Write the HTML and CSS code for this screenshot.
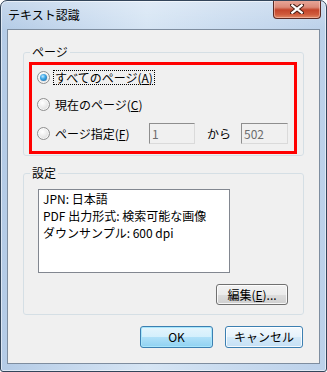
FILE: index.html
```html
<!DOCTYPE html>
<html lang="ja">
<head>
<meta charset="utf-8">
<title>テキスト認識</title>
<link rel="stylesheet" href="styles.css">
</head>
<body>
<div class="window">
  <div class="titlebar">
    <span class="title">テキスト認識</span>
    <button class="close" aria-label="閉じる">
      <svg width="14" height="10" viewBox="0 0 14 10">
        <path d="M2 1 L12 9 M12 1 L2 9" stroke="#4a2018" stroke-width="4.2" stroke-linecap="square"/>
        <path d="M2.3 1.3 L11.7 8.7 M11.7 1.3 L2.3 8.7" stroke="#ffffff" stroke-width="2.2" stroke-linecap="square"/>
      </svg>
    </button>
  </div>
  <div class="client">
    <fieldset class="group group-pages">
      <legend>ページ</legend>
      <div class="pages-body">
        <div class="highlight">
          <div class="row">
            <span class="radio checked"></span>
            <span class="label focus">すべてのページ(<u>A</u>)</span>
          </div>
          <div class="row">
            <span class="radio"></span>
            <span class="label">現在のページ(<u>C</u>)</span>
          </div>
          <div class="row row-range">
            <span class="radio"></span>
            <span class="label label-range">ページ指定(<u>F</u>)</span>
            <span class="textbox tb-from">1</span>
            <span class="kara">から</span>
            <span class="textbox tb-to">502</span>
          </div>
        </div>
      </div>
    </fieldset>
    <fieldset class="group group-settings">
      <legend>設定</legend>
      <div class="settings-body">
        <div class="listbox">
          <div class="item">JPN: 日本語</div>
          <div class="item">PDF 出力形式: 検索可能な画像</div>
          <div class="item">ダウンサンプル: 600 dpi</div>
        </div>
        <div class="edit-row">
          <button class="btn btn-edit">編集(<u>E</u>)...</button>
        </div>
      </div>
    </fieldset>
    <div class="actions">
      <button class="btn btn-default">OK</button>
      <button class="btn btn-hot">キャンセル</button>
    </div>
  </div>
</div>
</body>
</html>
```

FILE: styles.css
```css
* { box-sizing: border-box; }
html, body { margin: 0; padding: 0; background: #ffffff; }
body {
  font-family: "Noto Sans CJK JP", "Noto Sans", sans-serif;
  font-size: 12px;
  color: #000;
}
.window {
  width: 327px;
  height: 372px;
  border: 1px solid #33455a;
  border-radius: 7px 7px 3px 3px;
  background:
    linear-gradient(180deg, rgba(255,255,255,0.25) 0px, rgba(255,255,255,0) 28px),
    linear-gradient(90deg, #b4cbe6 0%, #c8daee 25%, #d6e5f4 45%, #c9dbef 70%, #bcd1ea 100%);
  box-shadow: inset 0 0 0 1px rgba(255,255,255,0.55);
  display: flex;
  flex-direction: column;
  overflow: hidden;
}
.titlebar {
  height: 28px;
  display: flex;
  align-items: flex-start;
  padding-left: 7px;
}
.title {
  line-height: 16px;
  margin-top: 6px;
  color: #000;
}
.close {
  margin-left: auto;
  margin-right: 5px;
  width: 48px;
  height: 19px;
  margin-top: -1px;
  padding: 0;
  border: 1px solid #5b2a24;
  border-top: none;
  border-radius: 0 0 4px 4px;
  background: linear-gradient(180deg, #e9a99c 0%, #dc8a78 40%, #c4452b 55%, #cf5a3c 80%, #e08a66 100%);
  box-shadow: inset 0 0 0 1px rgba(255,210,200,0.5);
  display: flex;
  align-items: center;
  justify-content: center;
}
.client {
  flex: 1;
  margin: 0 6px 7px 6px;
  border: 1px solid #7e8d9f;
  background: #f0f0f0;
  padding: 14px 15px 0 15px;
  display: flex;
  flex-direction: column;
}
.group {
  margin: 0;
  padding: 0;
  border: 1px solid #d5dfe5;
  border-radius: 3px;
  min-width: 0;
}
.group legend {
  margin-left: 6px;
  padding: 0 2px;
  line-height: 16px;
}
.group-pages { height: 112px; }
.pages-body { padding: 2px 6px 1px 5px; }
.highlight {
  height: 92px;
  border: 3px solid #ff0000;
  padding: 3px 0 0 5px;
  display: flex;
  flex-direction: column;
  gap: 9px;
}
.row {
  height: 18px;
  display: flex;
  align-items: center;
}
.row-range { height: 21px; margin-top: 1px; }
.radio {
  width: 13px;
  height: 13px;
  border-radius: 50%;
  border: 1px solid #8f8f8f;
  background: radial-gradient(circle at 40% 35%, #ffffff 0%, #ececec 45%, #cfcfcf 100%);
  box-shadow: inset 0 0 0 1px rgba(255,255,255,0.7);
  flex: none;
  position: relative;
}
.radio.checked::after {
  content: "";
  position: absolute;
  left: 2px;
  top: 2px;
  width: 7px;
  height: 7px;
  border-radius: 50%;
  background: radial-gradient(circle at 40% 35%, #bfe8ff 0%, #3da7e6 40%, #1c5f9c 100%);
}
.label {
  margin-left: 3px;
  padding: 0 1px;
  border: 1px dotted transparent;
  line-height: 13px;
}
.label.focus { border-color: #000; }
.label-range { width: 96px; }
.textbox {
  width: 46px;
  height: 21px;
  border: 1px solid;
  border-color: #8e8e8e #dadada #dadada #8e8e8e;
  background: #f0f0f0;
  color: #6d6d6d;
  line-height: 19px;
  padding-left: 2px;
}
.tb-to { width: 47px; }
.kara { margin: 0 10px 0 12px; line-height: 16px; }
.group-settings {
  margin-top: 9px;
  height: 150px;
}
.settings-body { padding: 8px 15px 9px 14px; }
.listbox {
  width: 192px;
  height: 84px;
  border: 1px solid #828790;
  background: #ffffff;
  padding: 0 4px;
}
.item { line-height: 17px; white-space: nowrap; }
.edit-row {
  margin-top: 11px;
  display: flex;
  justify-content: flex-end;
}
.btn {
  font-family: inherit;
  font-size: 12px;
  color: #000;
  height: 21px;
  padding: 0;
  border: 1px solid #707070;
  border-radius: 3px;
  background: linear-gradient(180deg, #f2f2f2 0%, #ebebeb 50%, #dddddd 51%, #cfcfcf 100%);
  box-shadow: inset 0 0 0 1px rgba(255,255,255,0.8);
  line-height: 18px;
}
.btn-edit { width: 72px; }
.actions {
  margin-top: 11px;
  padding-right: 1px;
  display: flex;
  justify-content: flex-end;
  gap: 12px;
}
.actions .btn { height: 22px; }
.btn-default {
  width: 73px;
  border-color: #3c7fb1;
  background: linear-gradient(180deg, #e4f5fd 0%, #d3effc 50%, #b0e0f8 51%, #8fd2f2 100%);
  box-shadow: inset 0 0 0 1px #a8e6fb;
}
.btn-hot {
  width: 78px;
  border-color: #3c7fb1;
  background: linear-gradient(180deg, #f3f9fd 0%, #e5f2fb 50%, #d4e9f8 51%, #c4e0f5 100%);
  box-shadow: inset 0 0 0 1px rgba(255,255,255,0.8);
}
```
